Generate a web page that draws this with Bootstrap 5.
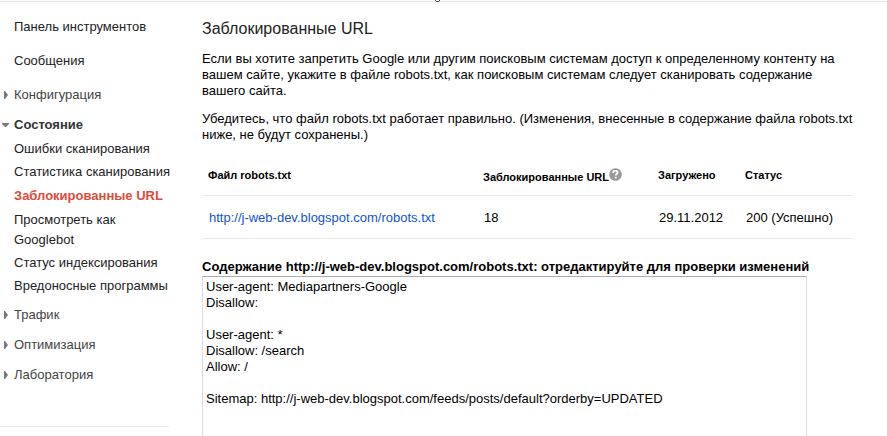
<!DOCTYPE html>
<html lang="ru">
<head>
<meta charset="utf-8">
<meta name="viewport" content="width=device-width, initial-scale=1">
<title>Заблокированные URL</title>
<link href="https://cdn.jsdelivr.net/npm/bootstrap@5.3.0/dist/css/bootstrap.min.css" rel="stylesheet">
<style>
  body { font: 13px/16px "Liberation Sans", Arial, sans-serif; color: #000; }
  a { text-decoration: none; }
  .topbar { height: 2px; border-bottom: 1px solid #e5e5e5; padding-right: 12px; }
  .topbar svg { width: 5px; height: 2px; }
  .side { width: 169px; line-height: 20px; padding-top: 15px; }
  .side a { color: #222; }
  .side .side-link { padding: 0 0 14px 14px; }
  .side .side-group { padding: 0 0 10px 4px; }
  .side .side-group a { color: #444; gap: 4px; }
  .side .side-group.opened { padding: 0 0 4px 2px; }
  .side .side-group.opened a { color: #333; }
  .side .side-sub { padding: 0 0 9px 14px; gap: 3px; }
  .side .side-sub a.current { color: #dd4b39; padding: 1px 0; }
  .side-end { border-top: 1px solid #ebebeb; margin-top: 31px; }
  .content-area { margin: 0 34px 0 33px; padding-top: 15px; }
  h1 { font-size: 16px; line-height: 24px; color: #222; margin-bottom: 10px; }
  .content-area p { margin-bottom: 12px; }
  .files th { font-size: 11px; padding: 12px 6px; }
  .files td { padding: 14px 7px 12px; }
  .files th, .files td { border-bottom: 1px solid #ebebeb; }
  .files th:nth-child(1) { width: 275px; }
  .files th:nth-child(2) { width: 175px; }
  .files th:nth-child(3) { width: 87px; }
  .files td a { color: #15c; }
  .help { width: 13px; height: 13px; }
  .editor-label { margin: 20px 0 1px; }
  .editor { width: 93%; padding: 2px 3px; border: 1px solid #dcdce4; border-top-color: #abadb3; line-height: 16px; color: #000; resize: none; }
</style>
<script src="https://cdn.jsdelivr.net/npm/bootstrap@5.3.0/dist/js/bootstrap.bundle.min.js"></script>
</head>
<body class="bg-white vh-100 overflow-hidden">
<header class="topbar d-flex justify-content-center">
  <svg viewBox="0 0 5 2" aria-hidden="true"><path d="M0 0h1v1h3V0h1v1H4v1H1V1H0z" fill="#445"/></svg>
</header>
<div class="d-flex">
  <nav class="side flex-shrink-0" aria-label="Разделы">
    <div class="side-link"><a href="#">Панель инструментов</a></div>
    <div class="side-link"><a href="#">Сообщения</a></div>
    <div class="side-group"><a href="#" class="d-flex align-items-center"><svg width="6" height="8" viewBox="0 0 6 8" aria-hidden="true"><path d="M0 0h1l3 4-3 4H0z" fill="#777"/></svg>Конфигурация</a></div>
    <div class="side-group opened"><a href="#" class="d-flex align-items-center fw-bold"><svg width="8" height="5" viewBox="0 0 8 5" aria-hidden="true"><path d="M0 0h7v1L4 4H3L0 1z" fill="#777"/></svg>Состояние</a></div>
    <div class="side-sub d-flex flex-column text-nowrap">
      <a href="#">Ошибки сканирования</a>
      <a href="#">Статистика сканирования</a>
      <a href="#" class="current fw-bold" aria-current="page">Заблокированные URL</a>
      <a href="#">Просмотреть как<br>Googlebot</a>
      <a href="#">Статус индексирования</a>
      <a href="#">Вредоносные программы</a>
    </div>
    <div class="side-group"><a href="#" class="d-flex align-items-center"><svg width="6" height="8" viewBox="0 0 6 8" aria-hidden="true"><path d="M0 0h1l3 4-3 4H0z" fill="#777"/></svg>Трафик</a></div>
    <div class="side-group"><a href="#" class="d-flex align-items-center"><svg width="6" height="8" viewBox="0 0 6 8" aria-hidden="true"><path d="M0 0h1l3 4-3 4H0z" fill="#777"/></svg>Оптимизация</a></div>
    <div class="side-group"><a href="#" class="d-flex align-items-center"><svg width="6" height="8" viewBox="0 0 6 8" aria-hidden="true"><path d="M0 0h1l3 4-3 4H0z" fill="#777"/></svg>Лаборатория</a></div>
    <div class="side-end"></div>
  </nav>
  <main class="content-area flex-grow-1">
    <h1 class="fw-normal">Заблокированные URL</h1>
    <p>Если вы хотите запретить Google или другим поисковым системам доступ к определенному контенту на вашем сайте, укажите в файле robots.txt, как поисковым системам следует сканировать содержание вашего сайта.</p>
    <p>Убедитесь, что файл robots.txt работает правильно. (Изменения, внесенные в содержание файла robots.txt ниже, не будут сохранены.)</p>
    <table class="files w-100">
      <thead>
        <tr>
          <th scope="col">Файл robots.txt</th>
          <th scope="col"><span class="d-flex align-items-start"><span class="pt-1 lh-1">Заблокированные URL</span><svg class="help" viewBox="0 0 13 13" role="img" aria-label="Справка"><circle cx="6.5" cy="6.5" r="6.3" fill="#999"/><path d="M4.3 5V4.3C4.3 3 5.2 2.8 6.5 2.8s2.2.6 2.2 1.8c0 1.4-2 1.3-2 3" fill="none" stroke="#fff" stroke-width="1.8"/><path d="M5.8 8.8h1.8v1.6H5.8z" fill="#fff"/></svg></span></th>
          <th scope="col">Загружено</th>
          <th scope="col">Статус</th>
        </tr>
      </thead>
      <tbody>
        <tr>
          <td><a href="#">http://j-web-dev.blogspot.com/robots.txt</a></td>
          <td>18</td>
          <td>29.11.2012</td>
          <td>200 (Успешно)</td>
        </tr>
      </tbody>
    </table>
    <label class="editor-label fw-bold d-block" for="robots">Содержание http://j-web-dev.blogspot.com/robots.txt: отредактируйте для проверки изменений</label>
    <textarea class="editor d-block" id="robots" rows="16" spellcheck="false">User-agent: Mediapartners-Google
Disallow:

User-agent: *
Disallow: /search
Allow: /

Sitemap: http://j-web-dev.blogspot.com/feeds/posts/default?orderby=UPDATED</textarea>
  </main>
</div>
</body>
</html>
